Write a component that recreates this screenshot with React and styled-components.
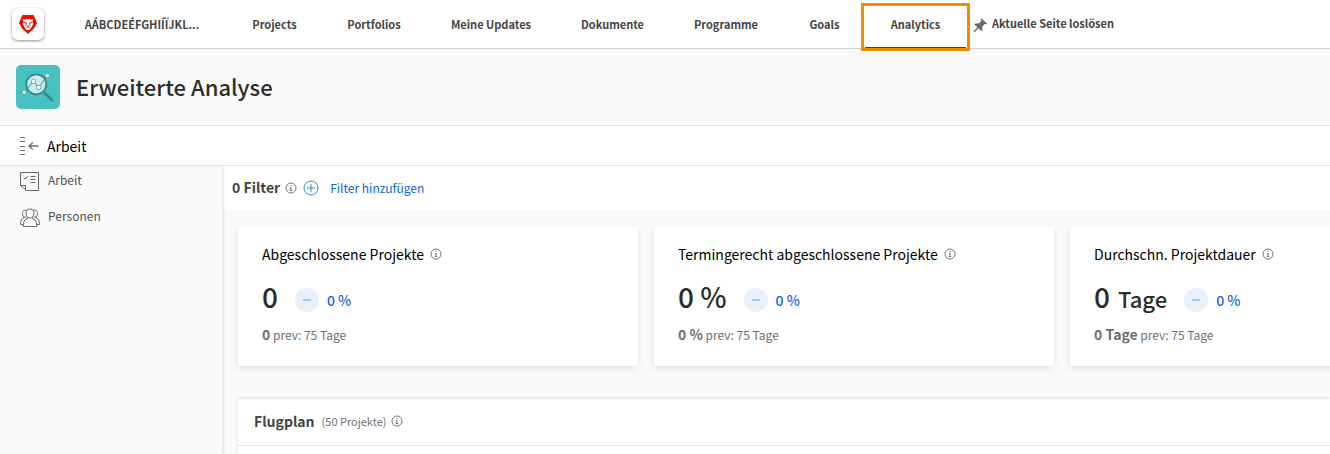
import React from 'react';
import styled, { createGlobalStyle } from 'styled-components';

const GlobalStyle = createGlobalStyle`
  * { box-sizing: border-box; }
  body { margin: 0; background: #fafafa; color: #2c2c2c; font-family: "Noto Sans CJK SC", "Noto Sans", sans-serif; font-size: 12px; line-height: 20px; overflow-x: hidden; }
  h1, h2, h3, p { margin: 0; }
`;

const PlainButton = styled.button`
  display: flex;
  align-items: center;
  padding: 0;
  border: 0;
  background: none;
  color: inherit;
  font: inherit;
  cursor: pointer;
`;

const TopNav = styled.nav`
  display: flex;
  height: 49px;
  background: #fff;
  border-bottom: 1px solid #d3d3d3;
  white-space: nowrap;
`;

const Logo = styled.a`
  flex: none;
  display: flex;
  align-items: center;
  justify-content: center;
  width: 32px;
  height: 32px;
  margin: 8px 13px 0 12px;
  border-radius: 6px;
  background: #fff;
  box-shadow: 0 1px 3px rgba(0, 0, 0, 0.45);
`;

const NavLink = styled.a`
  flex: 0 0 ${(p) => p.$width}px;
  display: flex;
  align-items: center;
  justify-content: center;
  font-size: 11px;
  font-weight: 700;
  color: #444;
  text-decoration: none;
`;

const ActiveLink = styled(NavLink)`
  height: 48px;
  margin: 3px 3px 0 -5px;
  padding-bottom: 6px;
  border: 3px solid #f08c00;
  position: relative;
  &::after { content: ""; position: absolute; left: 1px; right: 1px; bottom: 0; height: 1px; background: #444; }
`;

const PinButton = styled(PlainButton)`
  gap: 4px;
  height: 46px;
  font-size: 11px;
  font-weight: 700;
  color: #444;
  svg { margin-top: 4px; }
`;

const PageHeader = styled.header`
  display: flex;
  align-items: center;
  gap: 16px;
  height: 77px;
  padding: 0 16px;
  border-bottom: 1px solid #e1e1e1;
`;

const PageTitle = styled.h1`
  padding-bottom: 2px;
  font-size: 22px;
  line-height: 32px;
  font-weight: 500;
`;

const SectionBar = styled.div`
  display: flex;
  align-items: center;
  gap: 8px;
  height: 40px;
  padding: 0 20px;
  background: #fff;
  border-bottom: 1px solid #e1e1e1;
`;

const SectionTitle = styled.h2`
  font-size: 14px;
  font-weight: 400;
  color: #000;
`;

const Body = styled.div`
  display: flex;
  min-height: calc(100vh - 166px);
  overflow: hidden;
`;

const Sidebar = styled.aside`
  flex: 0 0 222px;
  display: flex;
  flex-direction: column;
  gap: 16px;
  padding: 4px 20px;
  box-shadow: 1px 0 4px rgba(60, 80, 110, 0.2);
  z-index: 1;
`;

const SideLink = styled.a`
  display: flex;
  align-items: flex-start;
  gap: 8px;
  height: 20px;
  color: #505050;
  text-decoration: none;
  svg { margin-top: 2px; }
`;

const Main = styled.main`
  flex: 1;
  min-width: 0;
  overflow: hidden;
`;

const FilterBar = styled.div`
  display: flex;
  align-items: center;
  height: 44px;
  padding: 0 10px;
  background: #fff;
`;

const FilterCount = styled.span`
  margin-right: 5px;
  padding-bottom: 2px;
  font-size: 14px;
  font-weight: 700;
  color: #444;
`;

const AddFilter = styled(PlainButton)`
  gap: 11px;
  margin-left: 6px;
  color: #0d66d0;
`;

const Cards = styled.section`
  display: flex;
  gap: 16px;
  padding: 16px;
`;

const Card = styled.article`
  flex: 0 0 400px;
  height: 140px;
  padding: 18px 24px;
  border-radius: 3px;
  background: #fff;
  box-shadow: 0 2px 6px rgba(0, 0, 0, 0.11);
`;

const CardTitle = styled.h3`
  display: flex;
  align-items: center;
  gap: 6px;
  font-size: 14px;
  font-weight: 400;
  color: #000;
`;

const Metric = styled.div`
  display: flex;
  align-items: center;
  height: 36px;
  margin-top: 18px;
`;

const Value = styled.strong`
  display: flex;
  align-items: baseline;
  align-self: flex-start;
  gap: 8px;
  margin-right: 17px;
  font-size: 28px;
  line-height: 28px;
  font-weight: 500;
`;

const Unit = styled.span`
  font-size: 22px;
`;

const Change = styled.span`
  display: flex;
  align-items: center;
  gap: 8px;
  font-size: 14px;
  font-weight: 500;
  color: #1466e0;
`;

const Dash = styled.span`
  display: flex;
  align-items: center;
  justify-content: center;
  width: 24px;
  height: 24px;
  border-radius: 50%;
  background: #e5f0fb;
  &::before { content: ""; width: 8px; height: 2px; background: #a3c8f0; }
`;

const Previous = styled.p`
  margin-top: 6px;
  color: #6e6e6e;
  strong { font-size: 14px; font-weight: 700; }
`;

const Panel = styled.section`
  margin: 16px 0 0 16px;
  min-height: 56px;
  background: #fff;
  border-top: 1px solid #e6e6e6;
  box-shadow: -1px 0 2px rgba(0, 0, 0, 0.08);
`;

const PanelHeader = styled.header`
  display: flex;
  align-items: center;
  height: 47px;
  padding: 0 16px 2px;
  border-bottom: 1px solid #e6e6e6;
`;

const PanelTitle = styled.h3`
  margin-right: 7px;
  font-size: 14px;
  font-weight: 700;
  color: #444;
`;

const PanelCount = styled.span`
  margin-right: 5px;
  font-size: 11px;
  color: #6e6e6e;
`;

const InfoIcon = () => (
  <svg width="12" height="12" viewBox="0 0 12 12" fill="none" stroke="#666" aria-hidden="true">
    <circle cx="6" cy="6" r="5" strokeWidth=".9" />
    <path d="M5 5.500h1v3M4.800 8.500h2.400M5.500 3.500h1" />
  </svg>
);

const AddIcon = () => (
  <svg width="16" height="16" viewBox="0 0 16 16" fill="none" stroke="#2d8ae0" aria-hidden="true">
    <circle cx="8" cy="8" r="7" />
    <path d="M8 4v8M4 8h8" />
  </svg>
);

const LionIcon = () => (
  <svg width="18" height="19" viewBox="0 0 18 19" aria-hidden="true">
    <path fill="#eb1000" d="M3.500 0h11L16 3l2 5-3 5.500L9 19l-6-5.500L0 8l2-5z" />
    <path fill="#fff" d="M3.800 4.200l2.700.6L7.300 4h3.400l.8.8 2.700-.6-.6 2.600.6 2-1.400 3-1.600 2.400-1.700.8H8.500l-1.700-.8-1.600-2.400-1.400-3 .6-2z" />
    <path fill="none" stroke="#eb1000" strokeWidth=".9" d="M4.800 6.800l3 1.600M13.200 6.800l-3 1.600M7.300 7.800l-.3 3M10.700 7.800l.3 3M7.500 12.800L9 12l1.500.8" />
    <path fill="#eb1000" d="M7.800 10.500h2.400L9 12z" />
  </svg>
);

const AnalysisIcon = () => (
  <svg width="44" height="44" viewBox="0 0 44 44" fill="none" aria-hidden="true">
    <rect width="44" height="44" rx="5" fill="#47c1bf" />
    <path d="M28.500 28l7.500 7" stroke="#35898a" strokeWidth="2.800" strokeLinecap="round" />
    <circle cx="20.300" cy="19.300" r="10" fill="#c7ecea" stroke="#35898a" strokeWidth="1.800" />
    <path d="M8.300 27.300l9-11 5.400 6.200 8.600-12" stroke="#35898a" strokeWidth=".9" />
    <g fill="#fff" stroke="#35898a" strokeWidth=".7">
      <circle cx="8.300" cy="27.300" r="2.200" />
      <circle cx="17.300" cy="16.300" r="2.200" />
      <circle cx="22.700" cy="22.500" r="2.200" />
      <circle cx="31.300" cy="10.500" r="2.200" />
    </g>
  </svg>
);

const CollapseIcon = () => (
  <svg width="19" height="20" viewBox="0 0 19 20" fill="none" stroke="#6a6e75" aria-hidden="true">
    <path d="M0 1.500h5M0 5.500h5M0 10.500h5M0 14.500h5M0 18.500h5" />
    <path d="M9 10h9.500M12.800 6.500L9 10l3.800 3.500" strokeWidth="1.300" />
  </svg>
);

const TasksIcon = () => (
  <svg width="20" height="20" viewBox="0 0 20 20" fill="none" stroke="#666" aria-hidden="true">
    <path d="M.5.500h18v18H6.500l-6-5zM.5 13.500h5v5M3.500 5.500l1.500 1.500 3-3M10.500 4.500h5M10.500 7.500h5M10.500 10.500h5" />
  </svg>
);

const PeopleIcon = () => (
  <svg width="20" height="20" viewBox="0 0 20 20" fill="none" stroke="#666" aria-hidden="true">
    <path d="M10 1c2.800 0 4 1.800 4 4 0 2.500-1.500 5-4 5S6 7.500 6 5c0-2.200 1.200-4 4-4z" />
    <path d="M7.500 9.500v1.200L4.800 12c-1 .8-1.300 4-1.500 6.500h13.400c-.2-2.500-.5-5.700-1.500-6.500l-2.700-1.300V9.500" />
    <path d="M6.500 2.500C4 1.500 2.500 3 2.500 5.500c0 1.500.5 2.600 1.300 3.300v1L2 11c-1 1-1.400 3-1.500 5.500h2.800M13.500 2.500c2.500-1 4 .5 4 3 0 1.500-.5 2.600-1.300 3.300v1L18 11c1 1 1.400 3 1.500 5.500h-2.800M3.800 8.800c.7.500 1.700.6 2.700.2M16.200 8.800c-.7.500-1.700.6-2.700.2" />
  </svg>
);

const PinIcon = () => (
  <svg width="15" height="15" viewBox="0 0 15 15" fill="#6a6a6a" aria-hidden="true">
    <path d="M8.500.500l5.500 5-.8.900-1.700-.3-2.300 2.700.3 3.300-1 1L5.600 10.300 1.800 14H.8v-1l3.700-3.800L1.200 6.500l1-1.100 3.400.2L8.200 3l-.5-1.700z" />
  </svg>
);

const links = [
  { label: 'AÁBCDEÉFGHIÍÏJKL...', width: 170 },
  { label: 'Projects', width: 95 },
  { label: 'Portfolios', width: 104 },
  { label: 'Meine Updates', width: 130 },
  { label: 'Dokumente', width: 113 },
  { label: 'Programme', width: 114 },
  { label: 'Goals', width: 83 },
];

const cards = [
  { title: 'Abgeschlossene Projekte', value: '0', previous: '0' },
  { title: 'Termingerecht abgeschlossene Projekte', value: '0 %', previous: '0 %' },
  { title: 'Durchschn. Projektdauer', value: '0', unit: 'Tage', previous: '0 Tage' },
];

export default function App() {
  return (
    <>
      <GlobalStyle />
      <TopNav>
        <Logo href="#" aria-label="Start"><LionIcon /></Logo>
        {links.map(({ label, width }) => <NavLink href="#" key={label} $width={width}>{label}</NavLink>)}
        <ActiveLink href="#" aria-current="page" $width={109}>Analytics</ActiveLink>
        <PinButton type="button"><PinIcon />Aktuelle Seite loslösen</PinButton>
      </TopNav>
      <PageHeader><AnalysisIcon /><PageTitle>Erweiterte Analyse</PageTitle></PageHeader>
      <SectionBar>
        <PlainButton type="button" aria-label="Seitenleiste einklappen"><CollapseIcon /></PlainButton>
        <SectionTitle>Arbeit</SectionTitle>
      </SectionBar>
      <Body>
        <Sidebar>
          <SideLink href="#"><TasksIcon />Arbeit</SideLink>
          <SideLink href="#"><PeopleIcon />Personen</SideLink>
        </Sidebar>
        <Main>
          <FilterBar>
            <FilterCount>0 Filter</FilterCount><InfoIcon />
            <AddFilter type="button"><AddIcon />Filter hinzufügen</AddFilter>
          </FilterBar>
          <Cards>
            {cards.map((card) => (
              <Card key={card.title}>
                <CardTitle>{card.title}<InfoIcon /></CardTitle>
                <Metric>
                  <Value>{card.value}{card.unit && <Unit>{card.unit}</Unit>}</Value>
                  <Change><Dash />0 %</Change>
                </Metric>
                <Previous><strong>{card.previous}</strong> prev: 75 Tage</Previous>
              </Card>
            ))}
          </Cards>
          <Panel>
            <PanelHeader>
              <PanelTitle>Flugplan</PanelTitle><PanelCount>(50 Projekte)</PanelCount><InfoIcon />
            </PanelHeader>
          </Panel>
        </Main>
      </Body>
    </>
  );
}
